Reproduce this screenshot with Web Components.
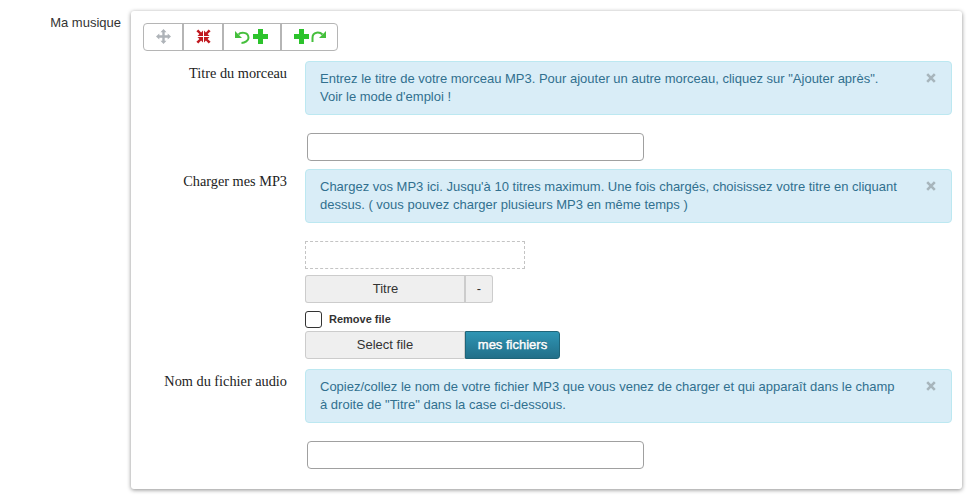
<!DOCTYPE html>
<html lang="fr"><head><meta charset="utf-8"><title>Ma musique</title>
<style>html,body{margin:0;background:#fff;height:498px;overflow:hidden;font-family:"Liberation Sans",Arial,sans-serif;color:#333}</style>
</head><body>
<template id="t-page"><style>
:host{display:grid;grid-template-columns:121px 831px;column-gap:10px;padding-top:11px;box-sizing:border-box;height:498px}
.lab{font:13px/14px "Liberation Sans",Arial,sans-serif;color:#333;text-align:right;padding-top:5px}
</style><div class="lab"><slot name="label"></slot></div><slot></slot></template>

<template id="t-panel"><style>
:host{display:block;box-sizing:border-box;height:478px;background:#fff;border-radius:3px;box-shadow:0 1px 4px rgba(0,0,0,.45);padding:12px 10px 20px 12px}
</style><slot></slot></template>

<template id="t-toolbar"><style>
:host{display:flex;width:195px;height:28px;box-sizing:border-box;border:1px solid #b5b5b5;border-radius:4px;margin-bottom:10px;background:#fff}
::slotted(*){border-right:2px solid #b5b5b5}
::slotted(:last-child){border-right:0}
</style><slot></slot></template>

<template id="t-tool"><style>
:host{display:flex;align-items:center;justify-content:center;box-sizing:border-box;height:100%;gap:3px}
::slotted(svg){display:block;margin-bottom:1px}
</style><slot></slot></template>

<template id="t-row"><style>
:host{display:grid;grid-template-columns:162px 647px;column-gap:0;}
.l{font:14.3px/16px "Liberation Serif","Times New Roman",serif;color:#222;text-align:right;padding:4px 18px 0 0}
.c{display:flex;flex-direction:column;align-items:flex-start;width:647px}
</style><div class="l"><slot name="label"></slot></div><div class="c"><slot></slot></div></template>

<template id="t-alert"><style>
:host{display:block;box-sizing:border-box;width:647px;height:54px;background:#d9edf7;border:1px solid #bce8f1;border-radius:4px;color:#31708f;font:13px/18px "Liberation Sans",Arial,sans-serif;padding:8px 50px 0 14px;position:relative}
.x{position:absolute;right:15px;top:11px;width:10px;height:10px;display:block}
</style><slot></slot><svg class="x" viewBox="0 0 10 10" aria-hidden="true"><path d="M1.200 1.200l7.600 7.600M8.800 1.200l-7.600 7.600" stroke="#a7b5bc" stroke-width="2.600" fill="none"/></svg></template>

<template id="t-input"><style>
:host{display:block;box-sizing:border-box;width:337px;height:28px;margin:18px 0 8px 2px;border:1px solid #a0a0a0;border-radius:4px;background:#fff}
</style></template>

<template id="t-drop"><style>
:host{display:block;box-sizing:border-box;width:220px;height:28px;margin-top:18px;border:1px dashed #c4c4c4;background:#fff}
</style></template>

<template id="t-btns"><style>
:host{display:flex;height:28px;margin-top:6px}
</style><slot></slot></template>

<template id="t-btn"><style>
:host{display:flex;align-items:center;justify-content:center;box-sizing:border-box;height:28px;padding-bottom:2px;background:#efefef;border:1px solid #ccc;color:#333;font:13px "Liberation Sans",Arial,sans-serif}
:host([first]){border-radius:3px 0 0 3px}
:host([last]){border-radius:0 3px 3px 0;border-left-width:0}
:host([primary]){background:linear-gradient(#2f95b4,#226f89);border:1px solid #1f6579;color:#fff;-webkit-text-stroke:.4px #fff;text-shadow:0 -1px 0 rgba(0,0,0,.25)}
</style><slot></slot></template>

<template id="t-check"><style>
:host{display:flex;align-items:center;height:16px;margin-top:8px}
.b{width:17px;height:17px;box-sizing:border-box;border:1px solid #333;border-radius:3px;background:#fff;margin-right:7px}
.t{font:bold 11px "Liberation Sans",Arial,sans-serif;color:#333}
</style><div class="b"></div><span class="t"><slot></slot></span></template>

<m-page>
  <span slot="label">Ma musique</span>
  <m-panel>
    <m-toolbar>
      <m-tool style="width:40px"><svg style="margin-left:1px" width="15" height="15" viewBox="0 0 15 15"><path d="M7.500 0l3 3.300H8.700v3h3V4.500L15 7.500l-3.300 3V8.700h-3v3h1.800l-3 3.300-3-3.300h1.800v-3h-3v1.800L0 7.500l3.300-3v1.800h3v-3H4.500z" fill="#aeb3b8"/></svg></m-tool>
      <m-tool style="width:40px"><svg style="margin-left:1px" width="15" height="15" viewBox="0 0 15 15"><g fill="#c0181f"><path d="M7 7V1.500L5.100 3.400 2.300.4.400 2.300l3 2.800L1.500 7zM8 7V1.500l1.900 1.900L12.700.4l1.900 1.900-3 2.800L13.500 7zM7 8v5.500l-1.900-1.900-2.800 3-1.900-1.900 3-2.800L1.500 8zM8 8v5.500l1.900-1.900 2.800 3 1.900-1.900-3-2.800L13.500 8z"/></g></svg></m-tool>
      <m-tool style="width:59px"><svg width="15" height="15" viewBox="0 0 15 15"><path d="M3.500 5.500C5 3.500 13.500 2 13.500 9 13.500 11.500 10 14 6.500 14" fill="none" stroke="#45bf3c" stroke-width="2"/><path d="M0 2V9H7z" fill="#45bf3c"/></svg><svg width="15" height="15" viewBox="0 0 15 15"><path d="M5 0h5v5h5v5h-5v5H5v-5H0V5h5z" fill="#2cc32c"/></svg></m-tool>
      <m-tool style="width:55px"><svg width="15" height="15" viewBox="0 0 15 15"><path d="M5 0h5v5h5v5h-5v5H5v-5H0V5h5z" fill="#2cc32c"/></svg><svg width="15" height="15" viewBox="0 0 15 15" style="margin-left:-1px"><path d="M11.500 5.500C9 3 1.500 2 1.500 9V13" fill="none" stroke="#45bf3c" stroke-width="2"/><path d="M15 2V9H8z" fill="#45bf3c"/></svg></m-tool>
    </m-toolbar>
    <m-row>
      <span slot="label">Titre du morceau</span>
      <m-alert>Entrez le titre de votre morceau MP3. Pour ajouter un autre morceau, cliquez sur "Ajouter après".<br>Voir le mode d'emploi !</m-alert>
      <m-input></m-input>
    </m-row>
    <m-row>
      <span slot="label">Charger mes MP3</span>
      <m-alert>Chargez vos MP3 ici. Jusqu'à 10 titres maximum. Une fois chargés, choisissez votre titre en cliquant dessus. ( vous pouvez charger plusieurs MP3 en même temps )</m-alert>
      <m-drop></m-drop>
      <m-btns><m-btn first style="width:161px;border-right-width:2px;padding-left:1px">Titre</m-btn><m-btn last style="width:27px">-</m-btn></m-btns>
      <m-check>Remove file</m-check>
      <m-btns style="margin-top:4px"><m-btn first style="width:160px">Select file</m-btn><m-btn primary last style="width:95px">mes fichiers</m-btn></m-btns>
    </m-row>
    <m-row style="margin-top:10px">
      <span slot="label">Nom du fichier audio</span>
      <m-alert>Copiez/collez le nom de votre fichier MP3 que vous venez de charger et qui apparaît dans le champ à droite de "Titre" dans la case ci-dessous.</m-alert>
      <m-input></m-input>
    </m-row>
  </m-panel>
</m-page>
<script>
for (const [tag,id] of [['m-page','t-page'],['m-panel','t-panel'],['m-toolbar','t-toolbar'],['m-tool','t-tool'],['m-row','t-row'],['m-alert','t-alert'],['m-input','t-input'],['m-drop','t-drop'],['m-btns','t-btns'],['m-btn','t-btn'],['m-check','t-check']]) {
  customElements.define(tag, class extends HTMLElement {
    constructor(){super();this.attachShadow({mode:'open'}).appendChild(document.getElementById(id).content.cloneNode(true));}
  });
}
</script>
</body></html>
